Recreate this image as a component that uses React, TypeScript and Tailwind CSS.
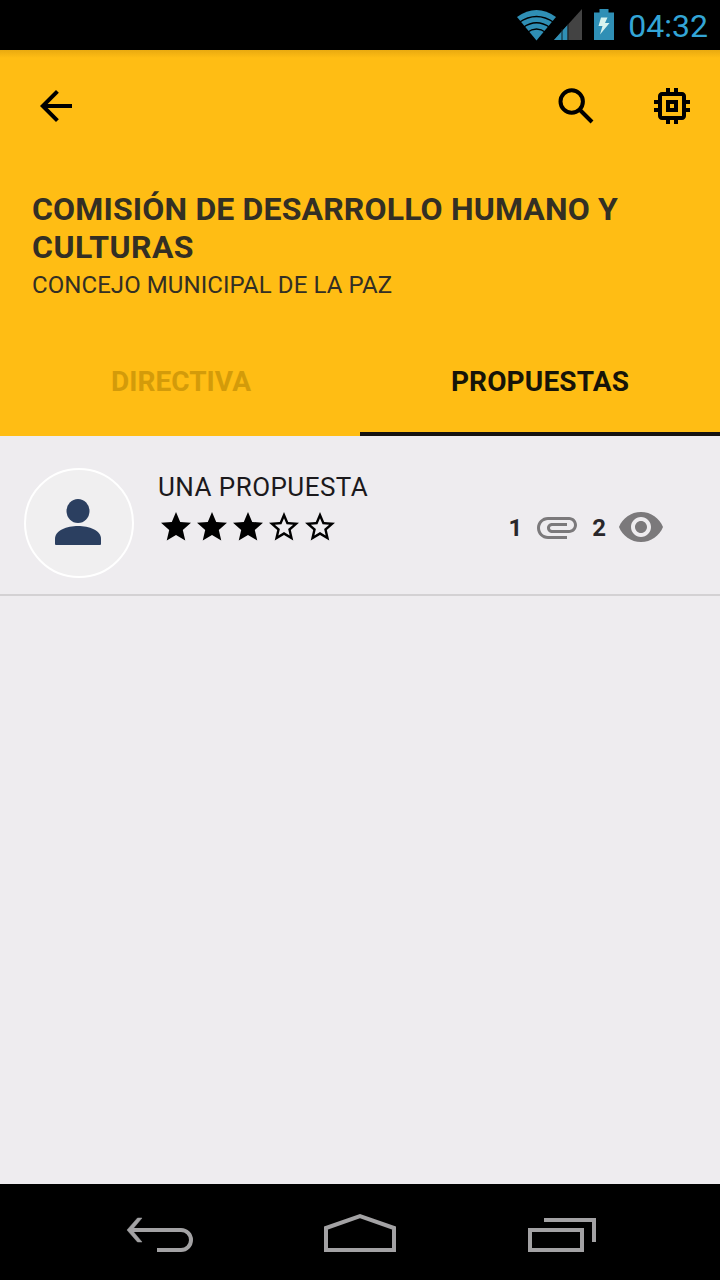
import { useState } from "react";

const STAR = "M12 17.27 18.18 21l-1.64-7.03L22 9.24l-7.19-.61L12 2 9.19 8.63 2 9.24l5.46 4.73L5.82 21z";
const STAR_BORDER = "M22 9.24l-7.19-.62L12 2 9.19 8.63 2 9.24l5.46 4.73L5.82 21 12 17.27 18.18 21l-1.63-7.03L22 9.24zM12 15.4l-3.76 2.27 1-4.28-3.32-2.88 4.38-.38L12 6.1l1.71 4.04 4.38.38-3.32 2.88 1 4.28L12 15.4z";

function Icon({ d, className }: { d: string; className: string }) {
  return (
    <svg viewBox="0 0 24 24" fill="currentColor" className={className}>
      <path d={d} />
    </svg>
  );
}

function StatusBar() {
  return (
    <div className="h-[50px] shrink-0 bg-black flex items-center justify-end pr-3">
      <svg width="100" height="50" viewBox="0 0 100 50" className="mr-[11px]">
        {/* wifi */}
        <path d="M0 17Q19.5 3 39 17L19.5 40.5Z" fill="#2f8fb5" />
        <g stroke="#000" strokeWidth="1.4" fill="none">
          <path d="M2 22.5Q19.5 10.500 37 22.500" />
          <path d="M6 27.500Q19.5 18 33 27.500" />
          <path d="M10 32.500Q19.5 25.500 29 32.500" />
        </g>
        {/* signal */}
        <path d="M65 9V40H37Z" fill="#434343" />
        <path d="M50.500 25V40H37Z" fill="#2f8fb5" />
        <path d="M45 29V40M51 24V40" stroke="#111e25" strokeWidth="1" />
        {/* battery */}
        <path d="M82.5 9h9v3.5H97V40H77V12.5h5.5z" fill="#2f8fb5" />
        <path d="M84 17.5h6.5L88 23h4.5L83 34.5l2.5-8.500h-4z" fill="#d7f3ee" />
      </svg>
      <span className="text-[32px] leading-[50px] text-[#33a5d6] pt-px">04:32</span>
    </div>
  );
}

function NavBar() {
  return (
    <div className="h-24 shrink-0 bg-black">
      <svg width="720" height="96" fill="none" stroke="#a3a2a4" strokeWidth="4">
        <path d="M130 46H181a10 10 0 0 1 0 20H157" />
        <path d="M127 46L137.500 34H142L132 46L142 58H137.500Z" fill="#a3a2a4" strokeWidth="0.5" />
        <path d="M326 66V44L360 32L394 44V66Z" />
        <path d="M530 46H582V66H530Z" />
        <path d="M544 36H594V58" />
      </svg>
    </div>
  );
}

export default function App() {
  const [tab, setTab] = useState<string>("PROPUESTAS");
  const tabs = ["DIRECTIVA", "PROPUESTAS"];
  const rating = 3;

  return (
    <div className="w-[720px] h-[1280px] flex flex-col overflow-hidden bg-[#eeecef] font-[Roboto,sans-serif]">
      <StatusBar />

      <header className="h-[386px] shrink-0 bg-[#ffbd14] flex flex-col">
        <div className="h-2 bg-linear-to-b from-[#e9aa10] to-[#ffbd14]"></div>
        <div className="h-24 flex items-center pl-8 pr-6">
          <button className="mr-auto">
            <Icon className="size-12" d="M20 11H7.830l5.590-5.590L12 4l-8 8 8 8 1.410-1.410L7.830 13H20v-2z" />
          </button>
          <button className="mr-12">
            <svg viewBox="0 0 48 48" fill="none" stroke="currentColor" strokeWidth="4" className="size-12">
              <circle cx="19.700" cy="19.500" r="11.200" />
              <path d="M28 28L40 40" />
            </svg>
          </button>
          <button>
            <Icon className="size-12" d="M15 9H9v6h6V9zm-2 4h-2v-2h2v2zm8-2V9h-2V7c0-1.100-.9-2-2-2h-2V3h-2v2h-2V3H9v2H7c-1.100 0-2 .9-2 2v2H3v2h2v2H3v2h2v2c0 1.100.9 2 2 2h2v2h2v-2h2v2h2v-2h2c1.100 0 2-.9 2-2v-2h2v-2h-2v-2h2zm-4 6H7V7h10v10z" />
          </button>
        </div>

        <div className="px-8 pt-9 h-[176px] whitespace-nowrap text-[#332f24]">
          <h1 className="text-[32px] leading-[38px] font-bold tracking-[0.15px]">
            COMISIÓN DE DESARROLLO HUMANO Y<br />
            <span className="tracking-[0.45px]">CULTURAS</span>
          </h1>
          <p className="text-2xl leading-[38px] tracking-[0.07px]">CONCEJO MUNICIPAL DE LA PAZ</p>
        </div>

        <div className="grid grid-cols-2 flex-1">
          {tabs.map((t) => (
            <button
              key={t}
              onClick={() => setTab(t)}
              className={
                tab === t
                  ? "border-b-4 border-[#151311] text-[#171408] text-[28px] font-bold tracking-[0.15px] pt-0.5"
                  : "border-b-4 border-transparent text-[#d39b0a] text-[28px] font-bold tracking-[0.05px] pt-0.5 pl-0.5"
              }
            >
              {t}
            </button>
          ))}
        </div>
      </header>

      <main className="flex-1">
        <div className="h-40 border-b-2 border-[#d3d1d3] flex pl-6 pr-[55px] pt-8">
          <div className="size-[110px] rounded-full border-2 border-white bg-[#f0eff0] flex items-center justify-center pb-0.5 pr-0.5">
            <svg width="46" height="46" viewBox="0 0 46 46" fill="#2b3f60">
              <ellipse cx="23" cy="12" rx="11.500" ry="12" />
              <path d="M0 45V40C0 31 12 27 23 27S46 31 46 40V45Q46 46 45 46H1Q0 46 0 45Z" />
            </svg>
          </div>
          <div className="ml-6 flex-1">
            <h2 className="text-[26px] leading-[38px] tracking-[0.45px] text-[#1b191c]">UNA PROPUESTA</h2>
            <div className="flex items-center justify-between h-[42px]">
              <div className="flex">
                {[1, 2, 3, 4, 5].map((n) => (
                  <Icon key={n} className="size-9" d={n <= rating ? STAR : STAR_BORDER} />
                ))}
              </div>
              <div className="flex items-center text-2xl font-bold text-[#29272a]">
                <span className="pt-0.5">1</span>
                <Icon className="size-12 ml-[11px] text-[#7b797b]" d="M7.500 18C4.460 18 2 15.540 2 12.500S4.460 7 7.500 7H18c2.210 0 4 1.790 4 4s-1.790 4-4 4H9.500C8.120 15 7 13.880 7 12.500S8.120 10 9.500 10H17v1.500H9.500c-.55 0-1 .45-1 1s.45 1 1 1H18c1.380 0 2.500-1.120 2.500-2.500S19.380 8.500 18 8.500H7.500c-2.210 0-4 1.790-4 4s1.790 4 4 4H17V18H7.500z" />
                <span className="ml-[11px] pt-0.5">2</span>
                <Icon className="size-12 ml-[11px] text-[#7b797b]" d="M12 4.500C7 4.500 2.730 7.610 1 12c1.730 4.390 6 7.500 11 7.500s9.270-3.110 11-7.500c-1.730-4.390-6-7.500-11-7.500zM12 17c-2.760 0-5-2.240-5-5s2.240-5 5-5 5 2.240 5 5-2.240 5-5 5zm0-8c-1.660 0-3 1.340-3 3s1.340 3 3 3 3-1.340 3-3-1.340-3-3-3z" />
              </div>
            </div>
          </div>
        </div>
      </main>

      <NavBar />
    </div>
  );
}
